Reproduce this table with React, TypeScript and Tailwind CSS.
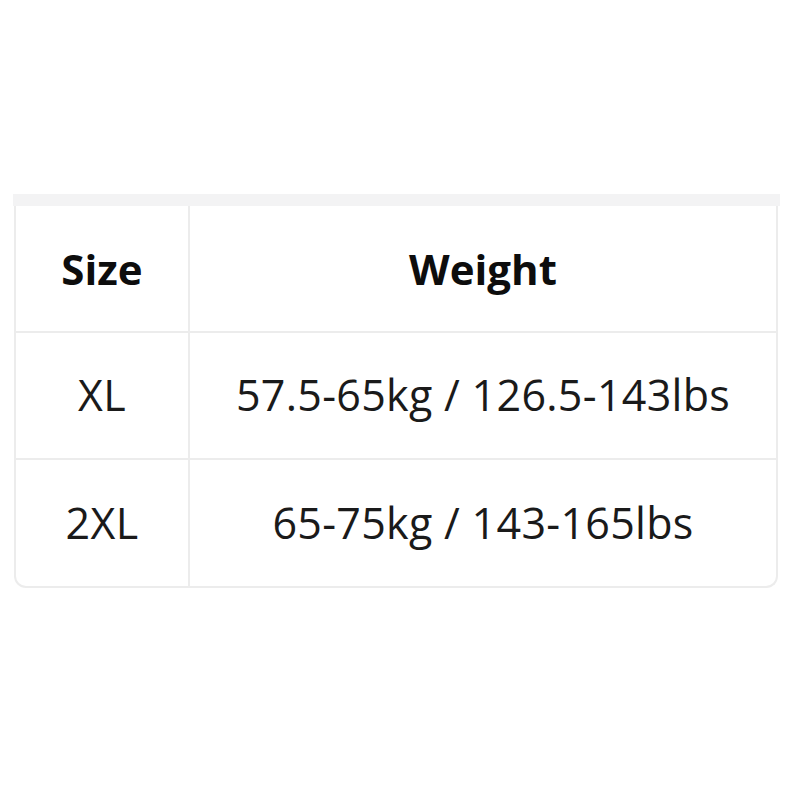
export default function App() {
  const rows = [
    ["XL", "57.5-65kg / 126.5-143lbs"],
    ["2XL", "65-75kg / 143-165lbs"],
  ];
  return (
    <div
      className="w-[800px] h-[800px] bg-white pt-[194px] pl-[13px]"
      style={{ fontFamily: '"Open Sans", "Noto Sans", sans-serif' }}
    >
      <div className="w-[767px]">
        <div className="h-[12px] bg-[#f3f3f4]" />
        <div className="ml-[1px] w-[764px] border-x-2 border-b-2 border-[#ececec] rounded-b-[12px] overflow-hidden">
          <div className="grid grid-cols-[174px_1fr] h-[127px] border-b-2 border-[#ececec]">
            <div className="flex items-center justify-center border-r-2 border-[#ececec] text-[42px] font-bold text-[#0d0d0d]">
              Size
            </div>
            <div className="flex items-center justify-center text-[42px] font-bold text-[#0d0d0d]">
              Weight
            </div>
          </div>
          {rows.map((r, i) => (
            <div
              key={r[0]}
              className={
                i === 0
                  ? "grid grid-cols-[174px_1fr] h-[127px] border-b-2 border-[#ececec]"
                  : "grid grid-cols-[174px_1fr] h-[126px]"
              }
            >
              <div className="flex items-center justify-center border-r-2 border-[#ececec] text-[43px] tracking-[0.3px] text-[#1a1a1a]">
                {r[0]}
              </div>
              <div className="flex items-center justify-center text-[43px] tracking-[0.3px] text-[#1a1a1a]">
                {r[1]}
              </div>
            </div>
          ))}
        </div>
      </div>
    </div>
  );
}
